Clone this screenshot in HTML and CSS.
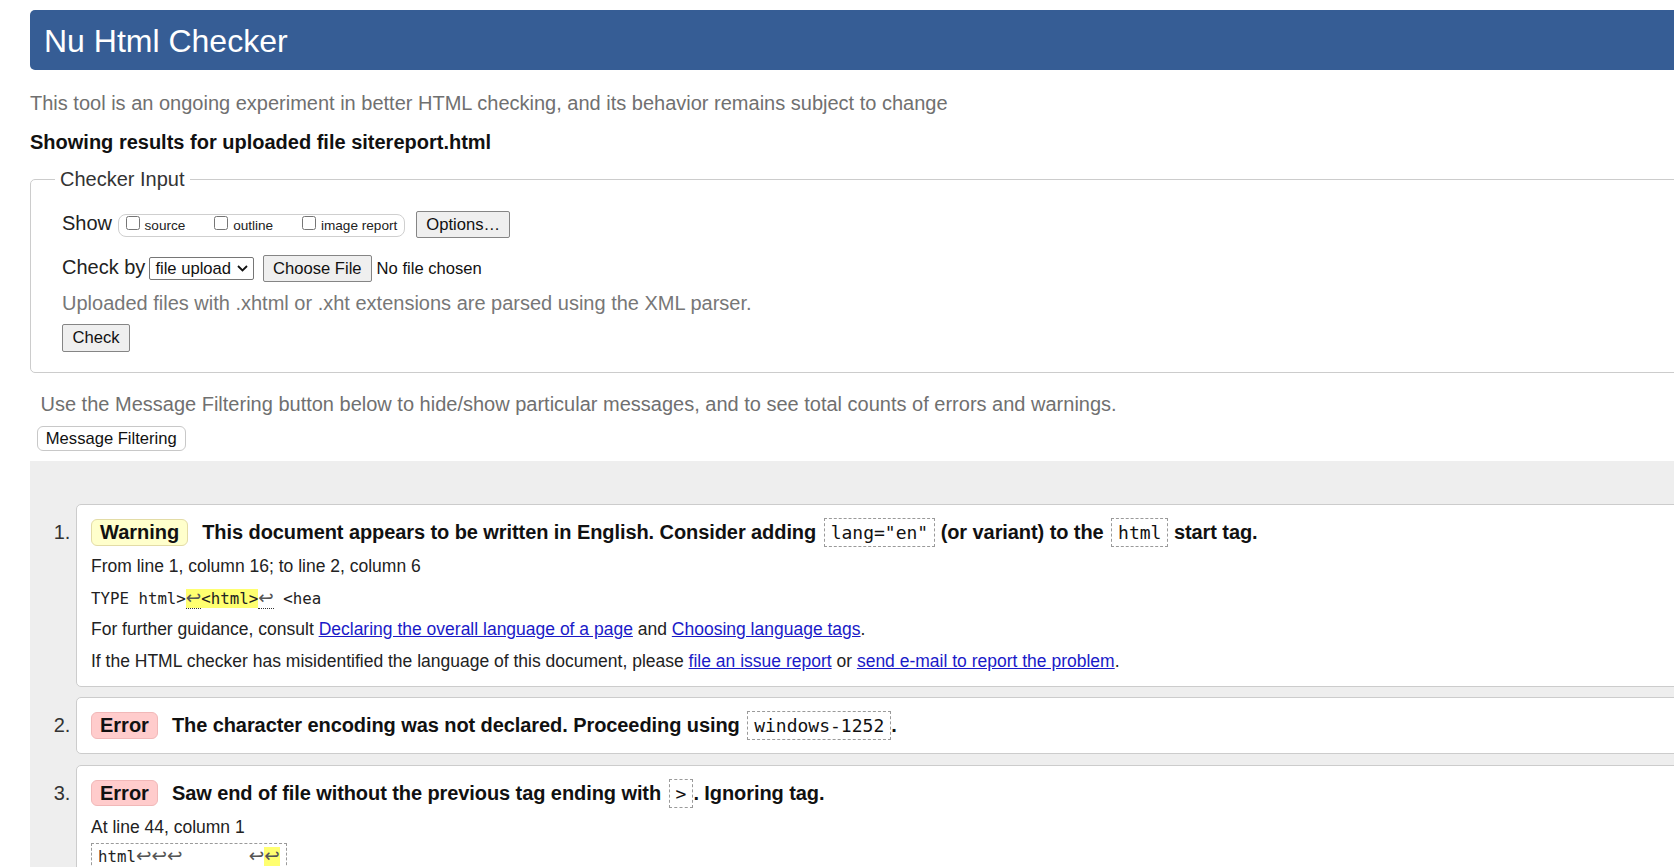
FILE: index.html
```html
<!DOCTYPE html>
<html lang="en">
<head>
<meta charset="utf-8">
<title>Showing results for uploaded file sitereport.html - Nu Html Checker</title>
<link rel="stylesheet" href="styles.css">
</head>
<body>
<div class="page">
  <h1 class="title">Nu Html Checker</h1>
  <p class="intro">This tool is an ongoing experiment in better HTML checking, and its behavior remains subject to change</p>
  <p class="showing">Showing results for uploaded file sitereport.html</p>

  <fieldset class="checker">
    <legend class="checker-legend">Checker Input</legend>
    <div class="fs-body">
      <div class="row row-show">
        <span class="row-label">Show</span>
        <span class="opts">
          <label class="opt"><input class="cb" type="checkbox">source</label>
          <label class="opt"><input class="cb" type="checkbox">outline</label>
          <label class="opt opt-last"><input class="cb" type="checkbox">image report</label>
        </span>
        <button class="btn btn-options" type="button">Options…</button>
      </div>
      <div class="row row-by">
        <span class="row-label">Check by</span>
        <span class="select">file upload<svg class="chev" width="11" height="7" viewBox="0 0 11 7"><polyline points="1,1 5.5,5.5 10,1" fill="none" stroke="#111" stroke-width="1.8"/></svg></span>
        <button class="btn btn-file" type="button">Choose File</button>
        <span class="nofile">No file chosen</span>
      </div>
      <p class="hint">Uploaded files with .xhtml or .xht extensions are parsed using the XML parser.</p>
      <div class="row row-submit">
        <button class="btn btn-check" type="button">Check</button>
      </div>
    </div>
  </fieldset>

  <p class="filter-note">Use the Message Filtering button below to hide/show particular messages, and to see total counts of errors and warnings.</p>
  <button class="filter-btn" type="button">Message Filtering</button>

  <div class="results">
    <ol class="messages">
      <li class="msg">
        <p class="msg-head"><strong class="badge badge-warning">Warning</strong> <span>This document appears to be written in English. Consider adding <code class="code">lang="en"</code> (or variant) to the <code class="code">html</code> start tag.</span></p>
        <p class="msg-detail">From line 1, column 16; to line 2, column 6</p>
        <p class="msg-detail"><code class="src">TYPE html&gt;<mark class="hl"><span class="lf dot">↩</span>&lt;html&gt;</mark><span class="lf dot">↩</span> &lt;hea</code></p>
        <p class="msg-detail">For further guidance, consult <a href="#">Declaring the overall language of a page</a> and <a href="#">Choosing language tags</a>.</p>
        <p class="msg-detail">If the HTML checker has misidentified the language of this document, please <a href="#">file an issue report</a> or <a href="#">send e-mail to report the problem</a>.</p>
      </li>
      <li class="msg">
        <p class="msg-head"><strong class="badge badge-error">Error</strong> <span>The character encoding was not declared. Proceeding using <code class="code">windows-1252</code>.</span></p>
      </li>
      <li class="msg">
        <p class="msg-head"><strong class="badge badge-error">Error</strong> <span>Saw end of file without the previous tag ending with <code class="code">&gt;</code>. Ignoring tag.</span></p>
        <p class="msg-detail">At line 44, column 1</p>
        <p class="msg-detail msg-extract"><code class="src boxed">html<span class="lf">↩↩↩</span>       <span class="lf">↩</span><mark class="hl"><span class="lf">↩</span></mark></code></p>
      </li>
    </ol>
  </div>
</div>
</body>
</html>
```

FILE: styles.css
```css
html {
  overflow: hidden;
  background: #ffffff;
}

body {
  margin: 0;
  font-family: "Liberation Sans", Arial, sans-serif;
  font-size: 20px;
  line-height: 23px;
  color: #222222;
}

.page {
  width: 1720px;
  padding: 10px 0 0 30px;
}

.title {
  margin: 0;
  height: 60px;
  box-sizing: border-box;
  padding: 2px 0 0 14px;
  line-height: 58px;
  font-size: 32px;
  font-weight: normal;
  color: #ffffff;
  background: #365d95;
  border-radius: 5px;
}

.intro {
  margin: 21.6px 0 0;
  color: #707070;
}

.showing {
  margin: 16px 0 0;
  font-weight: bold;
  color: #111111;
}

/* Checker input fieldset */
.checker {
  margin: 14.4px 0 0;
  padding: 20px 0 20px 24px;
  border: 1px solid #cccccc;
  border-radius: 5px;
  min-width: 0;
}

.checker-legend {
  padding: 0 5px;
  font-size: 20px;
  line-height: 23px;
  color: #333333;
}

.fs-body {
  padding-left: 7px;
}

.row {
  display: flex;
  align-items: baseline;
}

.row-label {
  color: #222222;
}

.row-show .row-label {
  margin-right: 5.5px;
}

.opts {
  display: block;
  padding: 0 7px 0 7px;
  border: 1px solid #cfcfcf;
  border-radius: 8px;
  font-size: 13.6px;
  line-height: 21.4px;
  color: #222222;
  margin-right: 11px;
}

.opt {
  margin-right: 25px;
}

.opt-last {
  margin-right: 0;
}

.cb {
  width: 14px;
  height: 14px;
  margin: 1px 5px 0 0;
  vertical-align: top;
}

.btn {
  font-family: "Liberation Sans", Arial, sans-serif;
  font-size: 16.6px;
  line-height: 19px;
  padding: 2.8px 9px;
  color: #111111;
  background: #efefef;
  border: 1px solid #858585;
  border-radius: 2px;
}

.row-by {
  margin-top: 17.4px;
}

.row-by .row-label {
  margin-right: 4px;
}

.select {
  display: inline-block;
  font-size: 16.6px;
  line-height: 21.3px;
  padding: 0 5px 0 5px;
  border: 1px solid #767676;
  border-radius: 2px;
  background: #ffffff;
  color: #111111;
  margin-right: 9px;
}

.chev {
  margin-left: 6px;
  vertical-align: 2px;
}

.nofile {
  font-size: 16.6px;
  margin-left: 5px;
  color: #111111;
}

.hint {
  margin: 10.5px 0 0;
  color: #777777;
}

.row-submit {
  margin-top: 8.5px;
}

.btn-check {
  padding: 3.8px 9.5px;
}

/* Filtering */
.filter-note {
  margin: 19.6px 0 0;
  padding-left: 10.5px;
  color: #707070;
}

.filter-btn {
  display: block;
  margin: 10.4px 0 0 6.8px;
  font-family: "Liberation Sans", Arial, sans-serif;
  font-size: 16.6px;
  line-height: 19px;
  padding: 1.85px 8px;
  color: #111111;
  background: #ffffff;
  border: 1px solid #c8c8c8;
  border-radius: 6px;
}

/* Results */
.results {
  margin-top: 10.3px;
  background: #eeeeee;
  min-height: 500px;
}

.messages {
  margin: 0;
  padding: 43px 0 0 46px;
}

.messages ::marker {
  color: #333333;
}

.msg {
  background: #ffffff;
  border: 1px solid #cccccc;
  border-radius: 5px;
  padding: 14px 14px 14px 14px;
  margin-bottom: 10.5px;
}

.msg-head {
  margin: 0;
  font-weight: bold;
  color: #111111;
  letter-spacing: -0.08px;
}

.badge {
  display: inline-block;
  padding: 0 8px;
  line-height: 24.7px;
  border: 1px solid;
  border-radius: 6px;
  margin-right: 8.5px;
  letter-spacing: 0;
}

.badge-warning {
  background: #ffffcc;
  border-color: #e3dca6;
}

.badge-error {
  background: #ffcccc;
  border-color: #f1b8b8;
}

.code {
  font-family: "DejaVu Sans Mono", "Liberation Mono", monospace;
  font-size: 0.9em;
  font-weight: normal;
  padding: 3px 6px;
  margin-left: 2px;
  border: 1px dashed #9a9a9a;
  letter-spacing: 0;
}

.msg-detail {
  margin: 10.5px 0 0;
  font-size: 17.5px;
  line-height: 21px;
  color: #222222;
}

.msg-detail a {
  color: #1a1ac8;
}

.src {
  font-family: "DejaVu Sans Mono", "Liberation Mono", monospace;
  font-size: 15.75px;
  white-space: pre;
  color: #222222;
}

.boxed {
  border: 1px dashed #9a9a9a;
  padding: 3px 6px;
}

.msg-extract {
  margin-top: 8px;
}

.hl {
  background: #ffff70;
  color: inherit;
}

.lf {
  font-family: "DejaVu Sans", sans-serif;
  font-size: 18.5px;
  line-height: 0;
  color: #555555;
}

.dot {
  border-bottom: 1px dotted #333333;
}
```
